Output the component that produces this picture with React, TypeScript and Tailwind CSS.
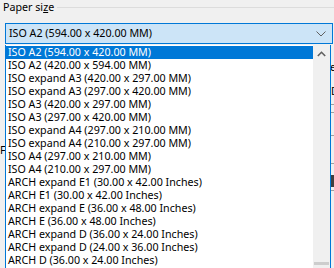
import React from "react";

const items = [
  "ISO A2 (594.00 x 420.00 MM)",
  "ISO A2 (420.00 x 594.00 MM)",
  "ISO expand A3 (420.00 x 297.00 MM)",
  "ISO expand A3 (297.00 x 420.00 MM)",
  "ISO A3 (420.00 x 297.00 MM)",
  "ISO A3 (297.00 x 420.00 MM)",
  "ISO expand A4 (297.00 x 210.00 MM)",
  "ISO expand A4 (210.00 x 297.00 MM)",
  "ISO A4 (297.00 x 210.00 MM)",
  "ISO A4 (210.00 x 297.00 MM)",
  "ARCH expand E1 (30.00 x 42.00 Inches)",
  "ARCH E1 (30.00 x 42.00 Inches)",
  "ARCH expand E (36.00 x 48.00 Inches)",
  "ARCH E (36.00 x 48.00 Inches)",
  "ARCH expand D (36.00 x 24.00 Inches)",
  "ARCH expand D (24.00 x 36.00 Inches)",
  "ARCH D (36.00 x 24.00 Inches)",
];

export default function App() {
  return (
    <div
      className="relative w-[334px] h-[268px] overflow-hidden bg-[#f0f0f0] text-[10.7px] text-black"
      style={{ fontFamily: '"Noto Sans", "Liberation Sans", Arial, sans-serif' }}
    >
      {/* group header */}
      <div className="flex items-center h-[15px] pl-[3px]">
        <span className="leading-[15px]">
          Paper si<span className="underline">z</span>e
        </span>
        <div className="flex-1 ml-[3px] h-[2px] border-t border-[#dcdcdc] border-b-white" />
      </div>

      {/* combo */}
      <div className="ml-[5px] mt-[8px] w-[328px] h-[21px] border border-[#0078d7] bg-[#cce4f7] flex items-center pl-[3px]">
        <span className="flex-1 leading-[19px]">ISO A2 (594.00 x 420.00 MM)</span>
        <svg width="10" height="6" viewBox="0 0 10 6" className="mr-[6px]">
          <path d="M0.5 0.5 L5 5 L9.5 0.5" fill="none" stroke="#606060" strokeWidth="1" />
        </svg>
      </div>

      {/* dialog content partly hidden behind the open list */}
      <div className="flex h-[223px]">
        <div className="w-[5px] flex flex-col pt-[100px] overflow-hidden">
          <span className="leading-[13px]">F</span>
        </div>
        <div className="flex-1" />
        <div className="w-[3px] flex flex-col overflow-hidden pt-[17px]">
          <span className="leading-[13px] -ml-[1px]">e</span>
          <span className="leading-[13px] mt-[11px]">D</span>
          <div className="h-px bg-[#a0a0a0] mt-[6px]" />
          <div className="h-px bg-[#a0a0a0] mt-[7px]" />
          <div className="h-px bg-[#a0a0a0] mt-[22px]" />
          <div className="h-px bg-[#a0a0a0] mt-[27px]" />
          <div className="h-[12px] bg-[#404040] mt-[11px]" />
          <div className="h-px bg-[#a0a0a0] mt-[3px]" />
        </div>
      </div>

      {/* dropdown list overlay */}
      <div className="absolute left-[5px] top-[45px] w-[326px] h-[240px] border-x border-[#0078d7] bg-white flex">
        <div className="flex-1 flex flex-col pt-[1px]">
          {items.map((t, i) => (
            <div
              key={i}
              className={
                i === 0
                  ? "h-[13px] leading-[13px] pl-[2px] bg-[#0078d7] text-white whitespace-nowrap"
                  : "h-[13px] leading-[13px] pl-[2px] whitespace-nowrap"
              }
            >
              {t}
            </div>
          ))}
        </div>
        <div className="w-[17px] bg-[#f0f0f0] flex flex-col items-center">
          <div className="h-[17px] flex items-center justify-center">
            <svg width="9" height="6" viewBox="0 0 9 6">
              <path d="M0.8 5 L4.5 1.3 L8.2 5" fill="none" stroke="#606060" strokeWidth="1.6" />
            </svg>
          </div>
          <div className="mt-auto mb-[20px] w-[15px] h-[3px] bg-[#cdcdcd]" />
        </div>
      </div>
    </div>
  );
}
